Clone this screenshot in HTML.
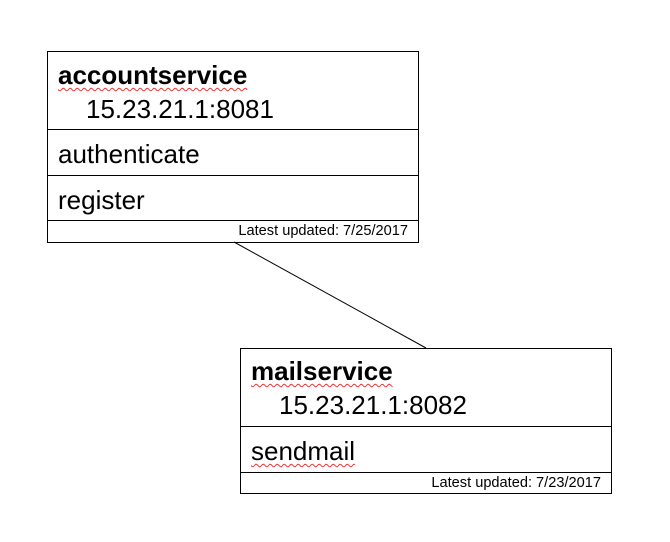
<!DOCTYPE html>
<html><head><style>
body{margin:0;width:670px;height:542px;background:#fff;position:relative;font-family:"Liberation Sans",Arial,sans-serif;color:#000;overflow:hidden}
.b{position:absolute;border:1px solid #000;box-sizing:border-box}
.h{position:absolute;left:0;right:0;height:1px;background:#000}
.t{position:absolute;white-space:nowrap;font-size:26px;line-height:1}
.s{position:absolute;right:10px;font-size:14.6px;line-height:1;white-space:nowrap}
.sq{text-decoration:underline wavy #e33;text-decoration-thickness:1px;text-underline-offset:3px}
</style></head><body>
<svg style="position:absolute;left:0;top:0" width="670" height="542"><line x1="234" y1="242" x2="426" y2="348" stroke="#000" stroke-width="1"/></svg>
<div class="b" style="left:47px;top:51px;width:372px;height:192px">
 <div class="t sq" style="left:10px;top:10px;font-weight:bold">accountservice</div>
 <div class="t" style="left:38px;top:44px">15.23.21.1:8081</div>
 <div class="h" style="top:77px"></div>
 <div class="t" style="left:10px;top:89px">authenticate</div>
 <div class="h" style="top:123px"></div>
 <div class="t" style="left:10px;top:135px">register</div>
 <div class="h" style="top:168px"></div>
 <div class="s" style="top:172px">Latest updated: 7/25/2017</div>
</div>
<div class="b" style="left:240px;top:348px;width:372px;height:146px">
 <div class="t sq" style="left:10px;top:9px;font-weight:bold">mailservice</div>
 <div class="t" style="left:38px;top:43px">15.23.21.1:8082</div>
 <div class="h" style="top:77px"></div>
 <div class="t sq" style="left:10px;top:89px">sendmail</div>
 <div class="h" style="top:123px"></div>
 <div class="s" style="top:127px">Latest updated: 7/23/2017</div>
</div>
</body></html>
